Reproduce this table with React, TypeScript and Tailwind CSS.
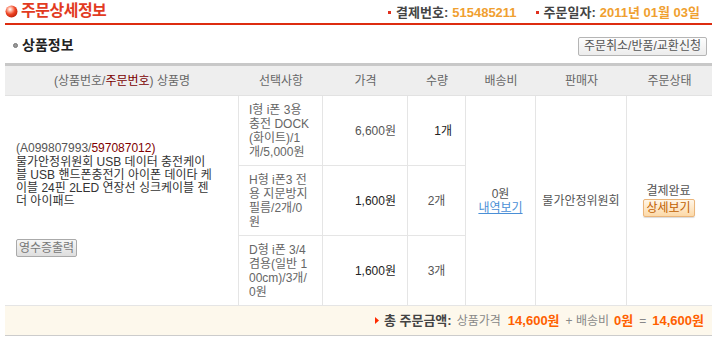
import React from "react";

const F = "font-['Liberation_Sans','Noto_Sans_CJK_KR',sans-serif]";

function OptCell({ lines, className }: { lines: string[]; className: string }) {
  return (
    <div className={`flex flex-col justify-center pl-[10px] border-r border-b border-[#e5e5e5] text-[12px] leading-[14px] text-[#666] ${className}`}>
      {lines.map((l, i) => (
        <div key={i} className="whitespace-nowrap">{l}</div>
      ))}
    </div>
  );
}

export default function App() {
  return (
    <div className={`w-[712px] h-[337px] bg-white overflow-hidden ${F}`}>
      {/* Title bar */}
      <div className="ml-[5px] h-[25px] flex items-center justify-between border-b-2 border-[#dd2c10] pb-[1px]">
        <div className="flex items-center gap-[3px]">
          <svg width="13" height="13" viewBox="0 0 13 13">
            <defs>
              <radialGradient id="rg" cx="0.38" cy="0.32" r="0.7">
                <stop offset="0" stopColor="#ffffff" />
                <stop offset="0.25" stopColor="#ffb39e" />
                <stop offset="0.6" stopColor="#ee4424" />
                <stop offset="1" stopColor="#c0240c" />
              </radialGradient>
            </defs>
            <circle cx="6.5" cy="6.5" r="6" fill="url(#rg)" />
          </svg>
          <span className="text-[16px] font-bold text-[#e23b1f] tracking-[-0.5px]">주문상세정보</span>
        </div>
        <div className="flex items-center text-[13px] font-bold mr-[12px] pt-[3px]">
          <span className="w-[3px] h-[3px] bg-[#e0301e] mr-[5px]" />
          <span className="text-[#444]">결제번호:</span>
          <span className="text-[#f0a030] ml-[4px]">515485211</span>
          <span className="w-[3px] h-[3px] bg-[#e0301e] ml-[19px] mr-[5px]" />
          <span className="text-[#444]">주문일자:</span>
          <span className="text-[#f0a030] ml-[4px]">2011년 01월 03일</span>
        </div>
      </div>

      {/* Section heading */}
      <div className="ml-[5px] h-[38px] flex items-center justify-between pr-[5px]">
        <div className="flex items-center pl-[8px] pt-[3px]">
          <span className="w-[5px] h-[5px] rounded-full bg-[#999] border border-[#777] mr-[4px]" />
          <span className="text-[14px] font-bold text-[#222]">상품정보</span>
        </div>
        <button className="h-[19px] px-[5px] mt-[4px] text-[12px] leading-[16px] text-[#555] border border-[#b5b5b5] rounded-[2px] bg-gradient-to-b from-[#fdfdfd] to-[#ececec]">
          주문취소/반품/교환신청
        </button>
      </div>

      {/* Table */}
      <div className="ml-[5px] border-t-[3px] border-[#c8c8c8]">
        <div className="grid grid-cols-[234px_84px_85px_58px_70px_91px_85px] grid-rows-[30px_70px_70px_70px]">
          {/* header */}
          <div className="col-start-1 row-start-1 flex items-center justify-center bg-[#eeeeee] border-b border-[#e2e2e2] text-[12px] text-[#666]">
            (상품번호/<span className="text-[#7a0000]">주문번호</span>) 상품명
          </div>
          {["선택사항", "가격", "수량", "배송비", "판매자", "주문상태"].map((h, i) => (
            <div
              key={h}
              className={`row-start-1 flex items-center justify-center bg-[#eeeeee] border-b border-[#e2e2e2] text-[12px] text-[#666] ${["col-start-2","col-start-3","col-start-4","col-start-5","col-start-6","col-start-7"][i]}`}
            >
              {h}
            </div>
          ))}

          {/* product */}
          <div className="col-start-1 row-start-2 row-span-3 flex flex-col justify-center gap-[27px] pl-[11px] border-r border-b border-[#e5e5e5]">
            <div className="text-[12px] leading-[13px] text-[#333]">
              <div className="text-[#555] mb-[1px]">
                (A099807993/<span className="text-[#800000]">597087012)</span>
              </div>
              <div className="whitespace-nowrap">물가안정위원회 USB 데이터 충전케이</div>
              <div className="whitespace-nowrap">블 USB 핸드폰충전기 아이폰 데이타 케</div>
              <div className="whitespace-nowrap">이블 24핀 2LED 연장선 싱크케이블 젠</div>
              <div className="whitespace-nowrap">더 아이패드</div>
            </div>
            <div>
              <button className="w-[61px] h-[18px] text-[12px] leading-[16px] text-[#777] border border-[#aaa] rounded-[2px] bg-gradient-to-b from-[#f6f6f6] to-[#dedede]">
                영수증출력
              </button>
            </div>
          </div>

          {/* options */}
          <OptCell className="col-start-2 row-start-2" lines={["I형 i폰 3용", "충전 DOCK", "(화이트)/1", "개/5,000원"]} />
          <OptCell className="col-start-2 row-start-3" lines={["H형 i폰3 전", "용 지문방지", "필름/2개/0", "원"]} />
          <OptCell className="col-start-2 row-start-4" lines={["D형 i폰 3/4", "겸용(일반 1", "00cm)/3개/", "0원"]} />

          {/* price */}
          <div className="col-start-3 row-start-2 flex items-center justify-end pr-[11px] border-r border-b border-[#e5e5e5] text-[12px] text-[#555]">6,600원</div>
          <div className="col-start-3 row-start-3 flex items-center justify-end pr-[11px] border-r border-b border-[#e5e5e5] text-[12px] text-[#222]">1,600원</div>
          <div className="col-start-3 row-start-4 flex items-center justify-end pr-[11px] border-r border-b border-[#e5e5e5] text-[12px] text-[#222]">1,600원</div>

          {/* qty */}
          <div className="col-start-4 row-start-2 flex items-center justify-end pr-[13px] border-r border-b border-[#e5e5e5] text-[12px] text-[#222]">1개</div>
          <div className="col-start-4 row-start-3 flex items-center justify-center border-r border-b border-[#e5e5e5] text-[12px] text-[#555]">2개</div>
          <div className="col-start-4 row-start-4 flex items-center justify-center border-r border-b border-[#e5e5e5] text-[12px] text-[#555]">3개</div>

          {/* shipping */}
          <div className="col-start-5 row-start-2 row-span-3 flex flex-col items-center justify-center border-r border-b border-[#e5e5e5] text-[12px] leading-[14px]">
            <span className="text-[#555]">0원</span>
            <span className="text-[#4a8fd6] underline">내역보기</span>
          </div>

          {/* seller */}
          <div className="col-start-6 row-start-2 row-span-3 flex items-center justify-center border-r border-b border-[#e5e5e5] text-[12px] text-[#555]">
            물가안정위원회
          </div>

          {/* status */}
          <div className="col-start-7 row-start-2 row-span-3 flex flex-col items-center justify-center border-b border-[#e5e5e5] text-[12px] pr-[2px]">
            <span className="text-[#555] leading-[15px]">결제완료</span>
            <button className="w-[52px] h-[18px] text-[12px] leading-[16px] text-[#c06000] border border-[#eab57a] rounded-[2px] bg-gradient-to-b from-[#fff6e8] to-[#fcd9a8] shadow-[0_1px_1px_rgba(0,0,0,0.15)]">
              상세보기
            </button>
          </div>
        </div>

        {/* footer */}
        <div className="h-[30px] bg-[#fdf8ec] border-b border-[#cccccc] flex items-center justify-end pr-[8px] text-[12px]">
          <svg width="4" height="7" viewBox="0 0 4 7" className="mr-[5px]">
            <polygon points="0,0 4,3.5 0,7" fill="#ff2a00" />
          </svg>
          <span className="font-bold text-[13px] text-[#444]">총 주문금액:</span>
          <span className="text-[#888] ml-[5px]">상품가격</span>
          <span className="font-bold text-[13px] text-[#ff6000] ml-[7px]">14,600원</span>
          <span className="text-[#888] ml-[6px]">+ 배송비</span>
          <span className="font-bold text-[13px] text-[#ff6000] ml-[5px]">0원</span>
          <span className="text-[#888] ml-[6px]">=</span>
          <span className="font-bold text-[13px] text-[#ff6000] ml-[6px]">14,600원</span>
        </div>
      </div>
    </div>
  );
}
